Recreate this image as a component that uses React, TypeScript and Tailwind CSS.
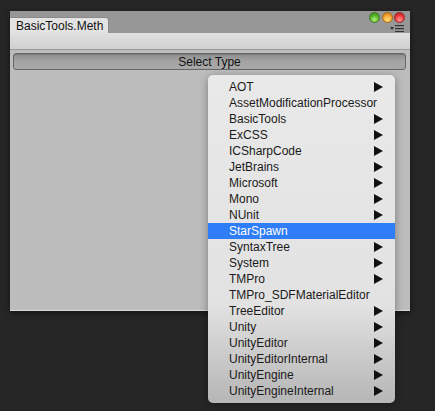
import React from "react";

const items: [string, boolean][] = [
  ["AOT", true],
  ["AssetModificationProcessor", false],
  ["BasicTools", true],
  ["ExCSS", true],
  ["ICSharpCode", true],
  ["JetBrains", true],
  ["Microsoft", true],
  ["Mono", true],
  ["NUnit", true],
  ["StarSpawn", false],
  ["SyntaxTree", true],
  ["System", true],
  ["TMPro", true],
  ["TMPro_SDFMaterialEditor", false],
  ["TreeEditor", true],
  ["Unity", true],
  ["UnityEditor", true],
  ["UnityEditorInternal", true],
  ["UnityEngine", true],
  ["UnityEngineInternal", true],
];

const font = "font-['Liberation_Sans',Arial,sans-serif]";

function Arrow({ white }: { white?: boolean }) {
  return (
    <svg width="9" height="10" viewBox="0 0 9 10" className="shrink-0">
      <polygon points="0,0 9,5 0,10" fill={white ? "#fff" : "#111"} />
    </svg>
  );
}

function Lights() {
  return (
    <div className="absolute right-[5px] top-[1px] flex flex-col items-end">
      <div className="flex gap-[1.5px]">
        <span className="h-[11px] w-[11px] rounded-full border border-[#3f7a22] bg-[radial-gradient(circle_at_50%_75%,#b5f07a,#56b22a_55%,#2f7a14)]" />
        <span className="h-[11px] w-[11px] rounded-full border border-[#a86a1c] bg-[radial-gradient(circle_at_50%_75%,#ffe27a,#f4a230_55%,#c46a10)]" />
        <span className="h-[11px] w-[11px] rounded-full border border-[#9c2424] bg-[radial-gradient(circle_at_50%_75%,#ff9a9a,#e8383a_55%,#a81818)]" />
      </div>
      <svg width="14" height="7" viewBox="0 0 14 7" className="mr-[1px] mt-[2px]">
        <polygon points="0,2 4,2 2,5" fill="#333" />
        <rect x="5" y="0" width="9" height="1.2" fill="#333" />
        <rect x="5" y="3" width="9" height="1.2" fill="#333" />
        <rect x="5" y="6" width="9" height="1" fill="#333" />
      </svg>
    </div>
  );
}

export default function App() {
  return (
    <div className={`relative min-h-[411px] w-[435px] overflow-hidden bg-[#262626] pl-[10px] pt-[11px] ${font}`}>
      {/* window */}
      <div className="flex h-[300px] w-[400px] flex-col bg-[#bcbcbc] shadow-[0_2px_6px_rgba(0,0,0,0.5)]">
        <div className="relative flex h-[22px] items-end bg-[#979797]">
          <div className="flex h-[16px] w-[99px] items-center rounded-tr-[3px] border-r border-t border-[#8a8a8a] bg-[#e3e3e3] pl-[6px] text-[12px] text-[#111]">
            BasicTools.Meth
          </div>
          <Lights />
        </div>
        <div className="h-[17px] border-b border-[#9a9a9a] bg-gradient-to-b from-[#e0e0e0] to-[#d0d0d0]" />
        <div className="flex-1 border-b border-[#d8d8d8] pl-[3px] pt-[3px]">
          <div className="flex h-[17px] w-[393px] items-center justify-center rounded-[3px] border border-[#666] bg-gradient-to-b from-[#8e8e8e] via-[#a4a4a4] to-[#a8a8a8] text-[12px] text-[#111] shadow-[inset_0_1px_0_rgba(0,0,0,0.15)]">
            Select Type
          </div>
        </div>
      </div>

      {/* popup menu */}
      <div className="absolute left-[208px] top-[75px] w-[187px] rounded-[5px] bg-[linear-gradient(to_bottom,#e9e9e9_0%,#e2e2e2_70%,#c4c4c4_90%,#b6b6b6_100%)] py-[4px] shadow-[0_2px_8px_rgba(0,0,0,0.35)]">
        {items.map(([name, sub]) => {
          const active = name === "StarSpawn";
          return (
            <div
              key={name}
              className={`flex h-[16px] items-center justify-between pl-[21px] pr-[12px] text-[12px] leading-none ${
                active ? "bg-[#2f7ef7] text-white" : "text-[#1a1a1a]"
              }`}
            >
              <span>{name}</span>
              {sub && <Arrow white={active} />}
            </div>
          );
        })}
      </div>
    </div>
  );
}
